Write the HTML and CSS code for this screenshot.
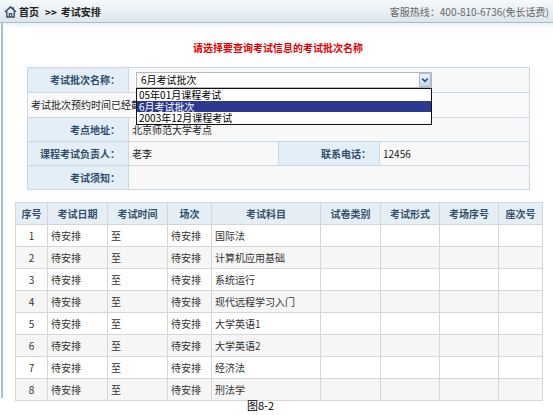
FILE: index.html
```html
<!DOCTYPE html>
<html lang="zh-CN">
<head>
<meta charset="utf-8">
<title>考试安排</title>
<link rel="stylesheet" href="styles.css">
</head>
<body>
<div class="topbar">
  <div class="crumb">
    <svg class="home" viewBox="0 0 13 13" aria-hidden="true">
      <path d="M1 7 L6.5 1.8 L12 7" fill="none" stroke="#34506c" stroke-width="1.6" stroke-linejoin="round"/>
      <path d="M9.3 2.2 V4.4" stroke="#34506c" stroke-width="1.4"/>
      <path d="M2.8 6.2 V12 H10.2 V6.2" fill="none" stroke="#34506c" stroke-width="1.4"/>
      <path d="M5.3 12 V8.6 H7.7 V12" fill="none" stroke="#34506c" stroke-width="1.2"/>
    </svg>
    <span class="crumb-home">首页</span>
    <span class="crumb-sep">&gt;&gt;</span>
    <span class="crumb-cur">考试安排</span>
  </div>
  <div class="hotline">客服热线：400-810-6736(免长话费)</div>
</div>

<div class="main">
  <div class="title">请选择要查询考试信息的考试批次名称</div>

  <table class="form">
    <colgroup>
      <col class="fc-label"><col class="fc-value"><col class="fc-label"><col class="fc-value">
    </colgroup>
    <tr class="fr-tall">
      <th>考试批次名称：</th>
      <td colspan="3" class="select-cell">
        <div class="select">
          <div class="select-box">
            <span class="select-text">6月考试批次</span>
            <span class="select-arrow">
              <svg viewBox="0 0 10 12" aria-hidden="true"><path d="M2.2 4.6 L5 7.4 L7.8 4.6" fill="none" stroke="#34508a" stroke-width="1.6"/></svg>
            </span>
          </div>
          <ul class="options">
            <li>05年01月课程考试</li>
            <li class="is-selected">6月考试批次</li>
            <li>2003年12月课程考试</li>
          </ul>
        </div>
      </td>
    </tr>
    <tr class="fr-tall">
      <td colspan="4" class="note">考试批次预约时间已经截止</td>
    </tr>
    <tr class="fr">
      <th>考点地址：</th>
      <td colspan="3">北京师范大学考点</td>
    </tr>
    <tr class="fr">
      <th>课程考试负责人：</th>
      <td>老李</td>
      <th>联系电话：</th>
      <td>12456</td>
    </tr>
    <tr class="fr">
      <th>考试须知：</th>
      <td colspan="3"></td>
    </tr>
  </table>

  <table class="grid">
    <colgroup>
      <col class="g-no"><col class="g-date"><col class="g-time"><col class="g-session"><col class="g-subject"><col class="g-type"><col class="g-form"><col class="g-room"><col class="g-seat">
    </colgroup>
    <thead>
      <tr><th>序号</th><th>考试日期</th><th>考试时间</th><th>场次</th><th>考试科目</th><th>试卷类别</th><th>考试形式</th><th>考场序号</th><th>座次号</th></tr>
    </thead>
    <tbody>
      <tr><td class="num">1</td><td>待安排</td><td>至</td><td>待安排</td><td>国际法</td><td></td><td></td><td></td><td></td></tr>
      <tr><td class="num">2</td><td>待安排</td><td>至</td><td>待安排</td><td>计算机应用基础</td><td></td><td></td><td></td><td></td></tr>
      <tr><td class="num">3</td><td>待安排</td><td>至</td><td>待安排</td><td>系统运行</td><td></td><td></td><td></td><td></td></tr>
      <tr><td class="num">4</td><td>待安排</td><td>至</td><td>待安排</td><td>现代远程学习入门</td><td></td><td></td><td></td><td></td></tr>
      <tr><td class="num">5</td><td>待安排</td><td>至</td><td>待安排</td><td>大学英语1</td><td></td><td></td><td></td><td></td></tr>
      <tr><td class="num">6</td><td>待安排</td><td>至</td><td>待安排</td><td>大学英语2</td><td></td><td></td><td></td><td></td></tr>
      <tr><td class="num">7</td><td>待安排</td><td>至</td><td>待安排</td><td>经济法</td><td></td><td></td><td></td><td></td></tr>
      <tr><td class="num">8</td><td>待安排</td><td>至</td><td>待安排</td><td>刑法学</td><td></td><td></td><td></td><td></td></tr>
    </tbody>
  </table>
</div>

<div class="caption">图8-2</div>
</body>
</html>
```

FILE: styles.css
```css
* { box-sizing: border-box; }

html, body { margin: 0; padding: 0; }

body {
  width: 553px;
  height: 415px;
  overflow: hidden;
  background: #fff;
  font-family: "Noto Sans CJK SC", "Noto Sans", sans-serif;
  font-size: 10px;
  color: #222;
}

/* top bar */
.topbar {
  height: 23px;
  display: flex;
  align-items: center;
  justify-content: space-between;
  padding: 0 4px 0 4px;
  background: linear-gradient(#f6f9fb, #dde6ec);
  border-bottom: 1px solid #a7bccb;
}

.crumb {
  display: flex;
  align-items: center;
  font-weight: bold;
  color: #222;
}

.home {
  width: 13px;
  height: 13px;
  margin-right: 2px;
}

.crumb-sep { margin: 0 4px 0 6px; }

.hotline { color: #666; }

/* main panel */
.main {
  margin-left: 1px;
  border-left: 2px solid #aabfcd;
  height: 375px;
  padding-top: 18px;
  background: linear-gradient(#edf2f5, #fff 6px);
}

.title {
  height: 14px;
  line-height: 14px;
  margin-bottom: 12px;
  text-align: center;
  font-weight: bold;
  color: #e00000;
}

table {
  border-collapse: collapse;
  table-layout: fixed;
}

/* form table */
.form {
  margin-left: 24px;
  width: 502px;
}

.fc-label { width: 101px; }
.fc-value { width: 150px; }

.fr-tall { height: 25px; }
.fr { height: 24px; }

.form th,
.form td {
  border: 1px solid #c9d8e2;
  padding: 0;
  line-height: 14px;
  vertical-align: middle;
}

.form th {
  background: #e3eef6;
  color: #2f4d6b;
  font-weight: bold;
  text-align: right;
  padding-right: 8px;
}

.form td {
  background: #f8f8f8;
  color: #222;
  padding-left: 3px;
  text-align: left;
}

.form td.note { padding-left: 3px; background: #fafafa; }

.form td.select-cell { padding-left: 7px; }

/* fake select with open list */
.select {
  position: relative;
  width: 296px;
  height: 16px;
}

.select-box {
  height: 16px;
  display: flex;
  align-items: center;
  justify-content: space-between;
  background: #fff;
  border: 1px solid #b4b9be;
  padding-left: 4px;
}

.select-text { color: #000; line-height: 14px; }

.select-arrow {
  width: 12px;
  height: 14px;
  display: flex;
  align-items: center;
  justify-content: center;
  background: linear-gradient(#eaf1fb, #c7d7ef);
  border: 1px solid #a3b6d6;
  border-radius: 1px;
}

.select-arrow svg { width: 10px; height: 12px; }

.options {
  position: absolute;
  top: 16px;
  left: 0;
  width: 296px;
  margin: 0;
  padding: 0;
  list-style: none;
  background: #fff;
  border: 1px solid #111;
  z-index: 2;
}

.options li {
  height: 11.5px;
  line-height: 11.5px;
  padding-left: 2px;
  color: #000;
  white-space: nowrap;
}

.options li.is-selected {
  background: #2b3a8f;
  color: #fff;
}

/* schedule grid */
.grid {
  margin-left: 12px;
  margin-top: 12px;
  width: 527px;
}

.g-no { width: 32px; }
.g-date { width: 60px; }
.g-time { width: 60px; }
.g-session { width: 44px; }
.g-subject { width: 109px; }
.g-type { width: 60px; }
.g-form { width: 59px; }
.g-room { width: 59px; }
.g-seat { width: 44px; }

.grid tr { height: 22px; }

.grid th,
.grid td {
  border: 1px solid #d6d6d6;
  padding: 0;
  line-height: 14px;
  vertical-align: middle;
  white-space: nowrap;
  overflow: hidden;
}

.grid th {
  background: #e5eef4;
  color: #34506e;
  font-weight: bold;
  text-align: center;
}

.grid td {
  color: #333;
  padding-left: 3px;
  text-align: left;
  background: #fff;
}

.grid tbody tr:nth-child(even) td { background: #f6f6f6; }

.grid td.num { text-align: center; padding-left: 0; }

.caption {
  height: 14px;
  line-height: 14px;
  padding-left: 247px;
  font-size: 11px;
  color: #000;
}
```
